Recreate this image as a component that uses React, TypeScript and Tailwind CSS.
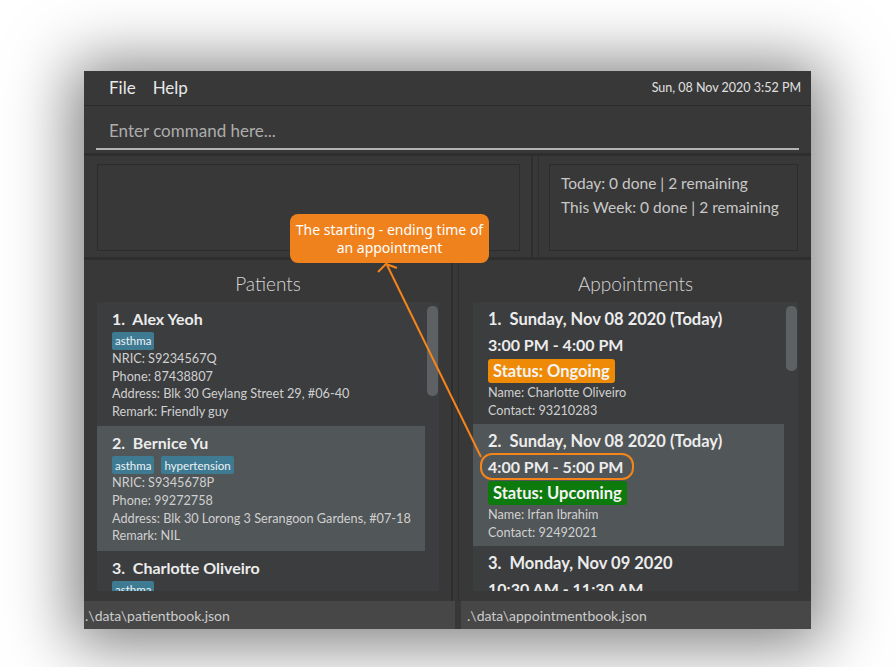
import React from "react";

const F = { fontFamily: "Lato, 'Open Sans', sans-serif" };

function Tag({ t }: { t: string }) {
  return (
    <span className="inline-flex h-[18px] items-center rounded-[2px] bg-[#3e7b93] px-[3px] text-[11.5px] leading-none text-[#eef2f4]">
      {t}
    </span>
  );
}

function Patient({
  n,
  name,
  tags,
  nric,
  phone,
  addr,
  remark,
  sel,
}: {
  n: number;
  name: string;
  tags: string[];
  nric?: string;
  phone?: string;
  addr?: string;
  remark?: string;
  sel?: boolean;
}) {
  return (
    <div className={`${sel ? "bg-[#515658]" : "bg-[#3b3d3f]"} pl-[15px] pt-[6px] pb-[6px]`}>
      <div className="h-[22px] text-[16px] font-bold leading-[22px] text-[#ececec]">
        {n}.&nbsp; {name}
      </div>
      <div className="mt-[2px] flex gap-[7px]">
        {tags.map((t) => (
          <Tag key={t} t={t} />
        ))}
      </div>
      {nric && (
        <div className="text-[12.7px] leading-[17.6px] text-[#d0d0d0]">
          <div>NRIC: {nric}</div>
          <div>Phone: {phone}</div>
          <div>Address: {addr}</div>
          <div>Remark: {remark}</div>
        </div>
      )}
    </div>
  );
}

function Appt({
  n,
  date,
  time,
  status,
  color,
  name,
  contact,
  sel,
}: {
  n: number;
  date: string;
  time: string;
  status?: string;
  color?: string;
  name?: string;
  contact?: string;
  sel?: boolean;
}) {
  return (
    <div className={`${sel ? "bg-[#515658]" : "bg-[#3b3d3f]"} pl-[15px] pt-[6px] pb-[5px]`}>
      <div className="h-[22px] text-[16.5px] font-bold leading-[22px] text-[#ececec]">
        {n}.&nbsp; {date}
      </div>
      <div className="mt-[4px] h-[22px] text-[16px] font-bold leading-[22px] text-[#ececec]">{time}</div>
      {status && (
        <>
          <div className="mt-[3px] flex">
            <span className={`${color} rounded-[3px] px-[5px] text-[16.5px] font-bold leading-[24px] text-[#f4f4f4]`}>
              {status}
            </span>
          </div>
          <div className="mt-[1px] text-[12.7px] leading-[17.5px] text-[#d0d0d0]">
            <div>Name: {name}</div>
            <div>Contact: {contact}</div>
          </div>
        </>
      )}
    </div>
  );
}

export default function App() {
  return (
    <div className="relative h-[667px] w-[896px] overflow-hidden bg-white" style={F}>
      <div className="ml-[84px] mt-[71px] flex h-[558px] w-[727px] flex-col bg-[#383838] shadow-[0_4px_60px_12px_rgba(0,0,0,0.5)]">
        {/* menu */}
        <div className="flex h-[35px] shrink-0 items-center border-b border-[#2a2a2a] pl-[25px] pr-[10px]">
          <span className="text-[17px] text-[#e8e8e8]">File</span>
          <span className="ml-[17px] text-[17px] text-[#e8e8e8]">Help</span>
          <span className="ml-auto text-[12.5px] text-[#e0e0e0]">Sun, 08 Nov 2020 3:52 PM</span>
        </div>
        {/* command */}
        <div className="h-[50px] shrink-0 border-b-[3px] border-[#2e2e2e] px-[12px] pt-[14px]">
          <div className="border-b-2 border-[#b4b4b4] pb-[6px] pl-[13px] text-[17px] leading-[22px] text-[#adadad]">
            Enter command here...
          </div>
        </div>
        {/* result/stats */}
        <div className="flex h-[104px] shrink-0 border-b-[3px] border-[#2e2e2e]">
          <div className="flex-1 border-r-[2px] border-[#2e2e2e] pb-[6px] pl-[13px] pr-[11px] pt-[8px]">
            <div className="h-full border border-[#2c2c2c]" />
          </div>
          <div className="w-[6px] border-r border-[#2e2e2e]" />
          <div className="w-[272px] pb-[6px] pl-[10px] pr-[13px] pt-[8px]">
            <div className="h-full border border-[#2c2c2c] pl-[11px] pt-[6px] text-[15.5px] leading-[24px] text-[#c8c8c8]">
              <div>Today: 0 done | 2 remaining</div>
              <div>This Week: 0 done | 2 remaining</div>
            </div>
          </div>
        </div>
        {/* lists */}
        <div className="flex min-h-0 flex-1">
          <div className="flex w-[369px] flex-col border-r-[2px] border-[#2e2e2e] pl-[13px] pr-[12px]">
            <div className="flex h-[42px] shrink-0 items-center justify-center pt-[7px] text-[19px] font-light text-[#d6d6d6]">
              Patients
            </div>
            <div className="flex min-h-0 flex-1 pb-[10px]">
              <div className="min-w-0 flex-1 overflow-hidden bg-[#3b3d3f]">
                <Patient n={1} name="Alex Yeoh" tags={["asthma"]} nric="S9234567Q" phone="87438807" addr="Blk 30 Geylang Street 29, #06-40" remark="Friendly guy" />
                <Patient n={2} name="Bernice Yu" tags={["asthma", "hypertension"]} nric="S9345678P" phone="99272758" addr="Blk 30 Lorong 3 Serangoon Gardens, #07-18" remark="NIL" sel />
                <Patient n={3} name="Charlotte Oliveiro" tags={["asthma"]} />
              </div>
              <div className="w-[14px] bg-[#3b3d3f] pl-[2px] pr-[1px] pt-[4px]">
                <div className="h-[90px] rounded-[5px] bg-[#5e6163]" />
              </div>
            </div>
          </div>
          <div className="w-[6px] border-r border-[#2e2e2e]" />
          <div className="flex flex-1 flex-col pl-[14px] pr-[13px]">
            <div className="flex h-[42px] shrink-0 items-center justify-center pt-[7px] text-[19px] font-light text-[#d6d6d6]">
              Appointments
            </div>
            <div className="flex min-h-0 flex-1 pb-[10px]">
              <div className="min-w-0 flex-1 overflow-hidden bg-[#3b3d3f]">
                <Appt n={1} date="Sunday, Nov 08 2020 (Today)" time="3:00 PM - 4:00 PM" status="Status: Ongoing" color="bg-[#ef8a06]" name="Charlotte Oliveiro" contact="93210283" />
                <Appt n={2} date="Sunday, Nov 08 2020 (Today)" time="4:00 PM - 5:00 PM" status="Status: Upcoming" color="bg-[#0c7a0c]" name="Irfan Ibrahim" contact="92492021" sel />
                <Appt n={3} date="Monday, Nov 09 2020" time="10:30 AM - 11:30 AM" />
              </div>
              <div className="w-[14px] bg-[#3b3d3f] pl-[2px] pr-[1px] pt-[4px]">
                <div className="h-[65px] rounded-[5px] bg-[#5e6163]" />
              </div>
            </div>
          </div>
        </div>
        {/* status */}
        <div className="flex h-[28px] shrink-0">
          <div className="flex w-[371px] items-center bg-[#474747] pl-[1px] text-[14px] text-[#cccccc]">.\data\patientbook.json</div>
          <div className="w-[6px] bg-[#383838]" />
          <div className="flex flex-1 items-center bg-[#474747] pl-[6px] text-[14px] text-[#cccccc]">.\data\appointmentbook.json</div>
        </div>
      </div>

      {/* annotation overlay */}
      <svg className="absolute left-0 top-0" width="896" height="667">
        <line x1="387" y1="265" x2="481" y2="457" stroke="#f58419" strokeWidth="2" />
        <polyline points="378,272 386,264 397,268" fill="none" stroke="#f58419" strokeWidth="2" />
        <rect x="481" y="454" width="152" height="25" rx="11" fill="none" stroke="#f58419" strokeWidth="2" />
      </svg>
      <div
        className="absolute left-[290px] top-[214px] flex h-[49px] w-[199px] items-center justify-center rounded-[8px] bg-[#f0821e] text-center text-[14px] leading-[18px] text-white"
        style={{ fontFamily: "'Noto Sans', sans-serif" }}
      >
        The starting - ending time of
        <br />
        an appointment
      </div>
    </div>
  );
}
